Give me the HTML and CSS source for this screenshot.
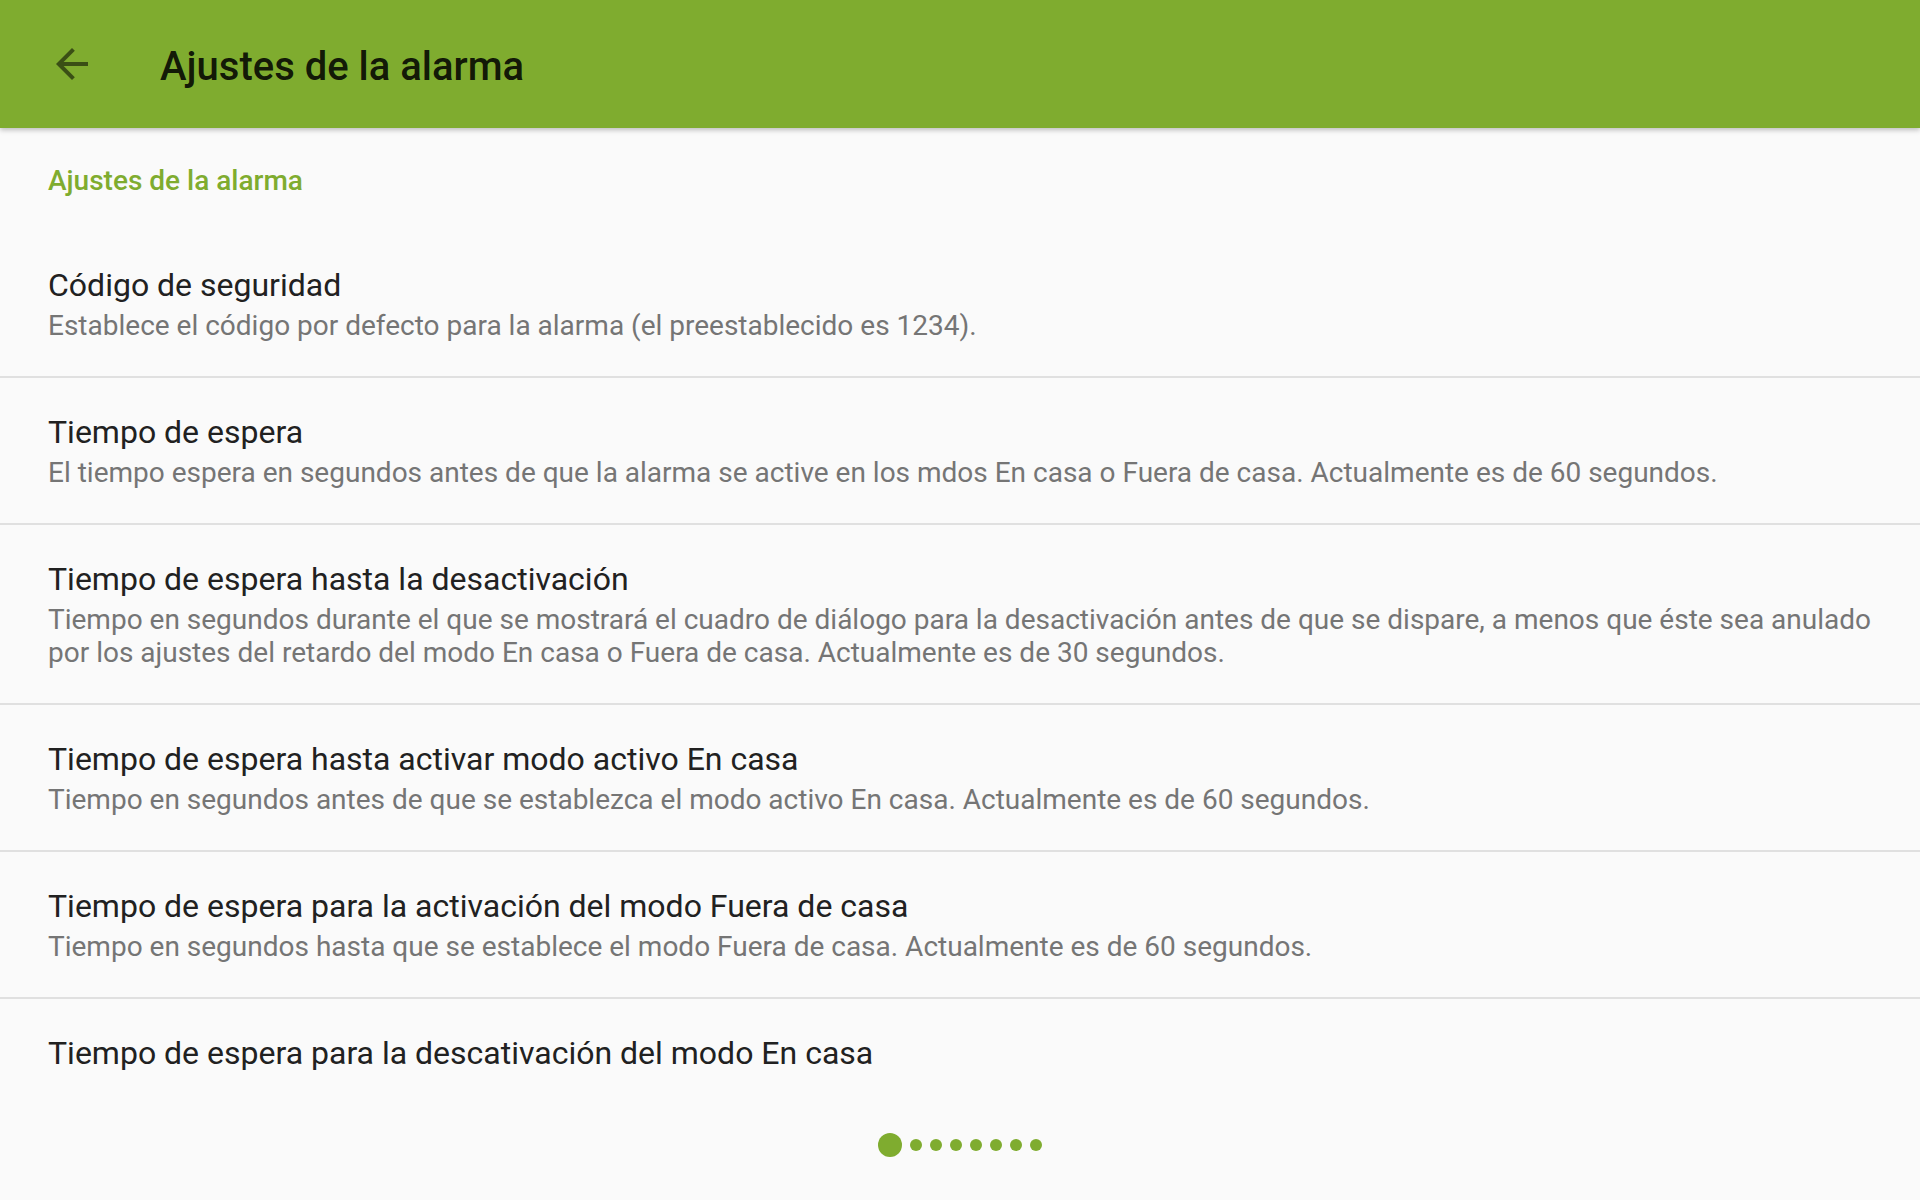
FILE: index.html
```html
<!DOCTYPE html>
<html lang="es">
<head>
    <meta charset="UTF-8">
    <meta name="viewport" content="width=device-width, initial-scale=1.0">
    <title>Ajustes de la alarma</title>
    <link rel="stylesheet" href="styles.css">
</head>
<body>

<div class="screen">
    <header class="toolbar">
        <button class="back-button" type="button" aria-label="Atrás">
            <svg viewBox="0 0 24 24" width="48" height="48"><path d="M20 11H7.83l5.59-5.59L12 4l-8 8 8 8 1.41-1.41L7.83 13H20v-2z"/></svg>
        </button>
        <h1 class="toolbar-title">Ajustes de la alarma</h1>
    </header>

    <main class="prefs">
        <div class="category">Ajustes de la alarma</div>

        <div class="pref">
            <div class="pref-title">Código de seguridad</div>
            <div class="pref-summary">Establece el código por defecto para la alarma (el preestablecido es 1234).</div>
        </div>

        <div class="pref">
            <div class="pref-title">Tiempo de espera</div>
            <div class="pref-summary">El tiempo espera en segundos antes de que la alarma se active en los mdos En casa o Fuera de casa. Actualmente es de 60 segundos.</div>
        </div>

        <div class="pref">
            <div class="pref-title">Tiempo de espera hasta la desactivación</div>
            <div class="pref-summary">Tiempo en segundos durante el que se mostrará el cuadro de diálogo para la desactivación antes de que se dispare, a menos que éste sea anulado por los ajustes del retardo del modo En casa o Fuera de casa. Actualmente es de 30 segundos.</div>
        </div>

        <div class="pref">
            <div class="pref-title">Tiempo de espera hasta activar modo activo En casa</div>
            <div class="pref-summary">Tiempo en segundos antes de que se establezca el modo activo En casa. Actualmente es de 60 segundos.</div>
        </div>

        <div class="pref">
            <div class="pref-title">Tiempo de espera para la activación del modo Fuera de casa</div>
            <div class="pref-summary">Tiempo en segundos hasta que se establece el modo Fuera de casa. Actualmente es de 60 segundos.</div>
        </div>

        <div class="pref">
            <div class="pref-title">Tiempo de espera para la descativación del modo En casa</div>
        </div>
    </main>

    <footer class="pager">
        <span class="dot active"></span>
        <span class="dot"></span>
        <span class="dot"></span>
        <span class="dot"></span>
        <span class="dot"></span>
        <span class="dot"></span>
        <span class="dot"></span>
        <span class="dot"></span>
    </footer>
</div>

</body>
</html>
```

FILE: styles.css
```css
body {
    margin: 0;
    font-family: Roboto, "Noto Sans", sans-serif;
    background-color: #fafafa;
}
.screen {
    display: flex;
    flex-direction: column;
    height: 100vh;
    overflow: hidden;
}
.toolbar {
    flex: none;
    height: 128px;
    display: flex;
    align-items: center;
    padding-left: 48px;
    background-color: #7fac2f;
    box-shadow: 0 2px 5px rgba(0, 0, 0, 0.25);
    position: relative;
    z-index: 1;
}
.back-button {
    width: 48px;
    height: 48px;
    padding: 0;
    border: none;
    background: none;
    fill: rgba(0, 0, 0, 0.54);
}
.back-button svg {
    display: block;
}
.toolbar-title {
    margin: 4px 0 0 64px;
    font-size: 40px;
    font-weight: 500;
    color: rgba(0, 0, 0, 0.87);
}
.prefs {
    flex: 1;
    overflow: hidden;
}
.category {
    padding: 36px 48px 34px;
    font-size: 28px;
    line-height: 33px;
    font-weight: 500;
    color: #7fac2f;
}
.pref {
    padding: 33px 48px 34px;
    border-bottom: 2px solid #e0e0e0;
}
.pref:last-child {
    border-bottom: none;
}
.pref-title {
    font-size: 32px;
    line-height: 42px;
    color: #212121;
}
.pref-summary {
    margin-top: 3px;
    font-size: 28px;
    line-height: 33px;
    color: #757575;
}
.pager {
    flex: none;
    height: 110px;
    display: flex;
    justify-content: center;
    align-items: center;
    gap: 8px;
}
.dot {
    width: 12px;
    height: 12px;
    border-radius: 50%;
    background-color: #7fac2f;
}
.dot.active {
    width: 24px;
    height: 24px;
}
```
